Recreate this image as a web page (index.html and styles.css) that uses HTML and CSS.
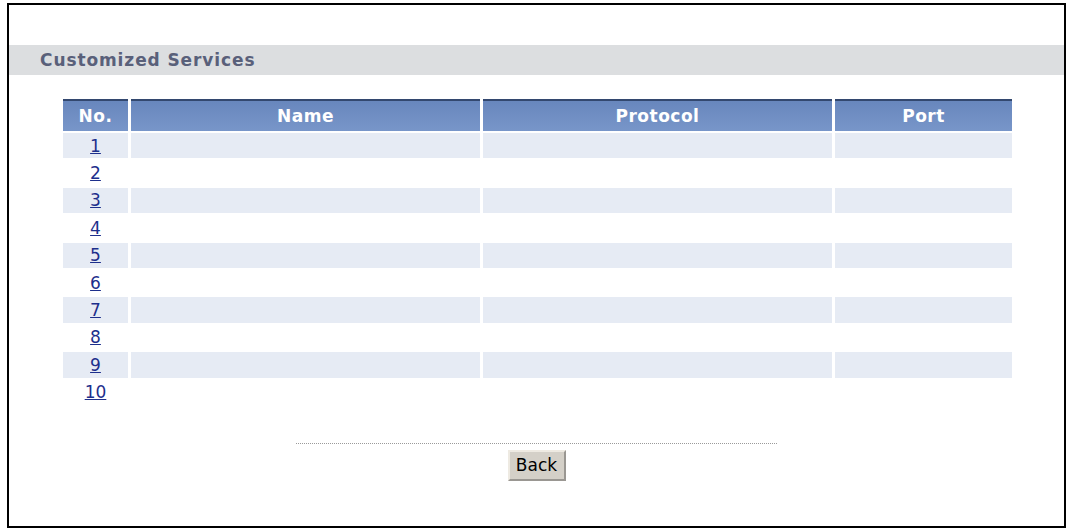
FILE: index.html
```html
<html>

<head>
    <link rel="stylesheet" href="styles.css">
    <title>Customized Services</title>
</head>

<body>
    <div class="frame">
        <div class="section-title">Customized Services</div>
        <table class="services">
            <thead>
                <tr>
                    <th class="col-no">No.</th>
                    <th class="col-name">Name</th>
                    <th class="col-proto">Protocol</th>
                    <th class="col-port">Port</th>
                </tr>
            </thead>
            <tbody>
                <tr class="odd"><td class="no"><a href="#">1</a></td><td></td><td></td><td></td></tr>
                <tr><td class="no"><a href="#">2</a></td><td></td><td></td><td></td></tr>
                <tr class="odd"><td class="no"><a href="#">3</a></td><td></td><td></td><td></td></tr>
                <tr><td class="no"><a href="#">4</a></td><td></td><td></td><td></td></tr>
                <tr class="odd"><td class="no"><a href="#">5</a></td><td></td><td></td><td></td></tr>
                <tr><td class="no"><a href="#">6</a></td><td></td><td></td><td></td></tr>
                <tr class="odd"><td class="no"><a href="#">7</a></td><td></td><td></td><td></td></tr>
                <tr><td class="no"><a href="#">8</a></td><td></td><td></td><td></td></tr>
                <tr class="odd"><td class="no"><a href="#">9</a></td><td></td><td></td><td></td></tr>
                <tr><td class="no"><a href="#">10</a></td><td></td><td></td><td></td></tr>
            </tbody>
        </table>
        <div class="actions">
            <div class="dots"></div>
            <button class="back">Back</button>
        </div>
    </div>
</body>

</html>
```

FILE: styles.css
```css
        body {
            margin: 0;
            padding: 0;
            background: #fff;
            font-family: "DejaVu Sans", Verdana, sans-serif;
            overflow: hidden;
        }

        .frame {
            margin: 3px 4px 0 7px;
            height: 481px;
            border: 2px solid #000;
            padding-top: 40px;
        }

        .section-title {
            height: 30px;
            line-height: 31px;
            background-color: #dcdee0;
            color: #59607a;
            font-size: 17px;
            font-weight: bold;
            letter-spacing: 0.9px;
            padding-left: 31px;
        }

        table.services {
            margin: 22px 0 0 51px;
            border-collapse: separate;
            border-spacing: 3px 2px;
        }

        .services th {
            height: 32px;
            padding: 0;
            border-top: 2px solid #33486f;
            background: linear-gradient(#6887bd, #7896c9);
            color: #fff;
            font-size: 17px;
            font-weight: bold;
            letter-spacing: 0.5px;
            text-align: center;
        }

        .col-no { width: 65px; }
        .col-name { width: 349px; }
        .col-proto { width: 349px; }
        .col-port { width: 177px; }

        .services td {
            height: 25.4px;
            padding: 0;
            line-height: 20px;
        }

        .services tr.odd td {
            background-color: #e6ebf4;
        }

        .services td.no {
            text-align: center;
            font-size: 17px;
        }

        .services td.no a {
            color: #1d2f8c;
        }

        .actions {
            display: flex;
            flex-direction: column;
            align-items: center;
            margin-top: 36px;
        }

        .dots {
            width: 481px;
            border-top: 1px dotted #9a9a9a;
        }

        .back {
            margin-top: 6px;
            width: 58px;
            height: 31px;
            font-family: "DejaVu Sans", Verdana, sans-serif;
            font-size: 17px;
            color: #000;
            background-color: #d4d0c8;
            border: 2px outset #eeeae2;
            padding: 0;
        }
```
